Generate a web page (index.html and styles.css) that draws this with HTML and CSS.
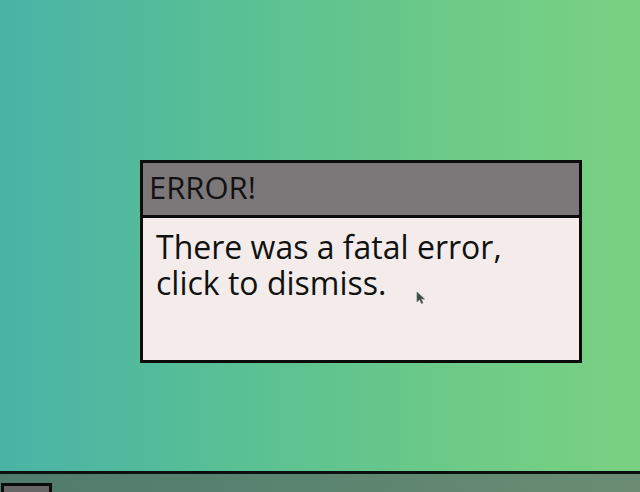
FILE: index.html
```html
<!DOCTYPE html>
<html>
<head>
<meta charset="utf-8">
<link rel="stylesheet" href="styles.css">
</head>
<body>
<div class="desktop">
  <div class="stage">
    <div class="dialog">
      <div class="title">ERROR!</div>
      <div class="body">There was a fatal error,<br>click to dismiss.</div>
      <svg class="cursor" width="10" height="14" viewBox="0 0 10 14"><path d="M1 1 L1 11 L3.5 8.5 L5.5 12.5 L7 11.8 L5 8 L8.5 8 Z" fill="#3d4a45" stroke="#6a7470" stroke-width="0.8"/></svg>
    </div>
  </div>
  <div class="taskbar">
    <div class="start"></div>
  </div>
</div>
</body>
</html>
```
FILE: styles.css
```css
html, body {
  margin: 0;
  padding: 0;
  width: 640px;
  height: 492px;
  overflow: hidden;
}
.desktop {
  width: 640px;
  height: 492px;
  display: flex;
  flex-direction: column;
  background: linear-gradient(90deg, #4ab3a6 0%, #5ac193 40%, #6fcb86 75%, #79d182 100%);
  font-family: "Open Sans", "Noto Sans", sans-serif;
}
.stage {
  flex: 0 0 471px;
  height: 471px;
  padding: 160px 0 0 140px;
  box-sizing: border-box;
}
.dialog {
  position: relative;
  width: 442px;
  height: 203px;
  box-sizing: border-box;
  border: 3px solid #0b0b0b;
  background: #f3ecea;
  display: flex;
  flex-direction: column;
}
.title {
  flex: 0 0 55px;
  box-sizing: border-box;
  background: #7c7879;
  border-bottom: 3px solid #0b0b0b;
  color: #121212;
  font-size: 31px;
  line-height: 49px;
  padding-left: 6px;
}
.body {
  padding: 11px 0 0 13px;
  font-size: 32px;
  line-height: 36px;
  color: #111;
}
.cursor {
  position: absolute;
  left: 273px;
  top: 128px;
}
.taskbar {
  flex: 1 1 auto;
  overflow: hidden;
  border-top: 3px solid #0c0f0d;
  background: linear-gradient(90deg, #4f7b6c 0%, #5b8470 50%, #6b8c72 100%);
  padding: 9px 0 0 1px;
}
.start {
  width: 45px;
  height: 20px;
  border: 3px solid #0b0b0b;
  border-bottom: none;
  background: #676667;
}
```
